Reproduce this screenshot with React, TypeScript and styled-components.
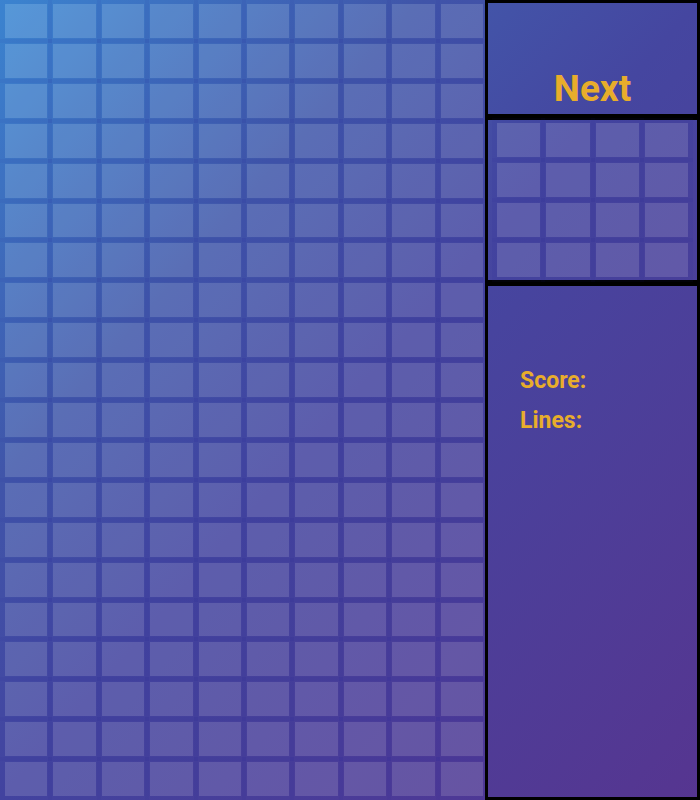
import React from "react";
import styled, { createGlobalStyle } from "styled-components";

const GlobalStyle = createGlobalStyle`
  html, body {
    margin: 0;
    padding: 0;
  }
  body {
    width: 700px;
    height: 800px;
    overflow: hidden;
    font-family: Roboto, "Liberation Sans", sans-serif;
    background: linear-gradient(to bottom right, #3d8ad4 0%, #4259ab 30%, #4546a0 50%, #563590 100%);
  }
`;

const Game = styled.div`
  display: flex;
  width: 700px;
  height: 800px;
`;

const Board = styled.div<{ $cols: number; $rows: number }>`
  box-sizing: border-box;
  width: 485px;
  height: 800px;
  display: grid;
  grid-template-columns: repeat(${(p) => p.$cols}, 1fr);
  grid-template-rows: repeat(${(p) => p.$rows}, 1fr);
  gap: 6px;
  padding: 4px 2px 4px 5px;
`;

const Cell = styled.div`
  background: rgba(255, 255, 255, 0.13);
  box-shadow: 0 0 0 5px rgba(40, 40, 150, 0.06);
`;

const Side = styled.aside`
  flex: 1;
  display: flex;
  flex-direction: column;
  min-width: 0;
`;

const Box = styled.section`
  box-sizing: border-box;
  border: 3px solid #000;
`;

const TitleBox = styled(Box)`
  height: 117px;
  display: flex;
  align-items: flex-end;
  justify-content: center;
  padding-bottom: 7px;
`;

const Title = styled.h2`
  margin: 0;
  font-size: 37px;
  line-height: 1;
  font-weight: 700;
  color: #e8ad2b;
`;

const PreviewBox = styled(Box)`
  height: 166px;
  padding: 3px 9px;
  display: grid;
  grid-template-columns: repeat(4, 1fr);
  grid-template-rows: repeat(4, 1fr);
  gap: 6px;
`;

const StatsBox = styled(Box)`
  flex: 1;
  padding: 75px 0 0 32px;
  display: flex;
  flex-direction: column;
`;

const Stat = styled.div`
  font-size: 23px;
  line-height: 40px;
  font-weight: 700;
  color: #e8ad2b;
`;

export default function App() {
  const board = Array.from({ length: 200 });
  const preview = Array.from({ length: 16 });
  return (
    <>
      <GlobalStyle />
      <Game>
        <Board $cols={10} $rows={20}>
          {board.map((_, i) => (
            <Cell key={i} />
          ))}
        </Board>
        <Side>
          <TitleBox>
            <Title>Next</Title>
          </TitleBox>
          <PreviewBox>
            {preview.map((_, i) => (
              <Cell key={i} />
            ))}
          </PreviewBox>
          <StatsBox>
            <Stat>Score:</Stat>
            <Stat>Lines:</Stat>
          </StatsBox>
        </Side>
      </Game>
    </>
  );
}
